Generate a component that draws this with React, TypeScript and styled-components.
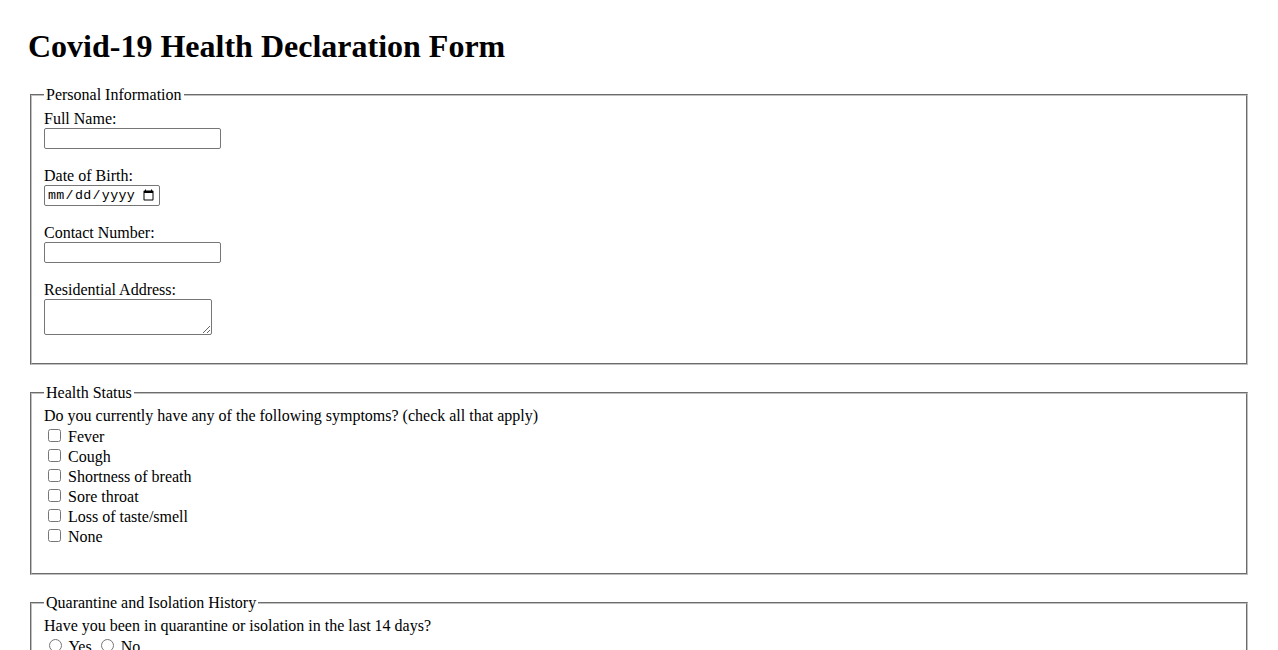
import React from "react";
import styled, { createGlobalStyle } from "styled-components";

const GlobalStyle = createGlobalStyle`
  html { scrollbar-width: none; }
  html::-webkit-scrollbar { display: none; }
  body {
    margin: 8px;
    background: #ffffff;
    color: #000000;
    font-family: "Liberation Serif", "Times New Roman", serif;
    font-size: 16px;
  }
`;

const Page = styled.div`
  padding: 20px;
`;

const Title = styled.h1`
  margin: 0 0 21.44px;
  font-size: 32px;
  font-weight: bold;
  line-height: normal;
`;

const Form = styled.form`
  display: block;
`;

const Section = styled.fieldset`
  margin: 0 2px 18.8px;
  padding: 5.6px 12px 10px;
  border: 2px groove rgb(192, 192, 192);
  min-width: min-content;
`;

const Legend = styled.legend`
  padding: 0 2px;
  line-height: normal;
`;

const Field = styled.div`
  display: flex;
  flex-direction: column;
  align-items: flex-start;
  margin-bottom: 17.6px;
`;

const Label = styled.label`
  display: block;
  line-height: 18.4px;
`;

const TextInput = styled.input`
  box-sizing: border-box;
  width: 177px;
  height: 21px;
  margin: 0;
  padding: 1px 2px;
  border: 1px solid #767676;
  border-radius: 2px;
  font-family: "Liberation Sans", Arial, sans-serif;
  font-size: 13.333px;
  background: #fff;
`;

const DateInput = styled.input`
  box-sizing: border-box;
  width: 116px;
  height: 21px;
  margin: 0;
  padding: 1px 2px;
  border: 1px solid #767676;
  border-radius: 2px;
  font-family: "Liberation Mono", "DejaVu Sans Mono", monospace;
  font-size: 13.333px;
  letter-spacing: 0.3px;
  color: #000;
  background: #fff;
`;

const TextArea = styled.textarea`
  box-sizing: border-box;
  width: 168px;
  height: 36px;
  margin: 0;
  padding: 2px;
  border: 1px solid #767676;
  border-radius: 2px;
  font-family: "Liberation Mono", monospace;
  font-size: 13.333px;
  background: #fff;
`;

const Question = styled.p`
  margin: 0;
  line-height: 18.4px;
`;

const OptionList = styled.div`
  display: block;
  margin-bottom: 17px;
`;

const OptionRow = styled.label`
  display: block;
  line-height: normal;
`;

const Check = styled.input`
  width: 13px;
  height: 13px;
  margin: 3px 3px 3px 4px;
  vertical-align: baseline;
`;

const RadioRow = styled.div`
  display: block;
  line-height: normal;
`;

const Radio = styled.input`
  width: 13px;
  height: 13px;
  margin: 3px 3px 0 5px;
  vertical-align: baseline;
`;

const symptoms = [
  "Fever",
  "Cough",
  "Shortness of breath",
  "Sore throat",
  "Loss of taste/smell",
  "None",
];

export default function App() {
  return (
    <>
      <GlobalStyle />
      <Page>
        <Title>Covid-19 Health Declaration Form</Title>
        <Form onSubmit={(e) => e.preventDefault()}>
          <Section>
            <Legend>Personal Information</Legend>
            <Field>
              <Label htmlFor="fullName">Full Name:</Label>
              <TextInput id="fullName" type="text" />
            </Field>
            <Field>
              <Label htmlFor="dob">Date of Birth:</Label>
              <DateInput id="dob" type="date" />
            </Field>
            <Field>
              <Label htmlFor="contact">Contact Number:</Label>
              <TextInput id="contact" type="tel" />
            </Field>
            <Field>
              <Label htmlFor="address">Residential Address:</Label>
              <TextArea id="address" />
            </Field>
          </Section>

          <Section>
            <Legend>Health Status</Legend>
            <Question>Do you currently have any of the following symptoms? (check all that apply)</Question>
            <OptionList>
              {symptoms.map((s) => (
                <OptionRow key={s}>
                  <Check type="checkbox" name="symptoms" value={s} /> {s}
                </OptionRow>
              ))}
            </OptionList>
          </Section>

          <Section>
            <Legend>Quarantine and Isolation History</Legend>
            <Question>Have you been in quarantine or isolation in the last 14 days?</Question>
            <RadioRow>
              <Radio type="radio" name="quarantine" value="yes" id="qYes" />{" "}
              <label htmlFor="qYes">Yes</label>{" "}
              <Radio type="radio" name="quarantine" value="no" id="qNo" />{" "}
              <label htmlFor="qNo">No</label>
            </RadioRow>
          </Section>
        </Form>
      </Page>
    </>
  );
}
